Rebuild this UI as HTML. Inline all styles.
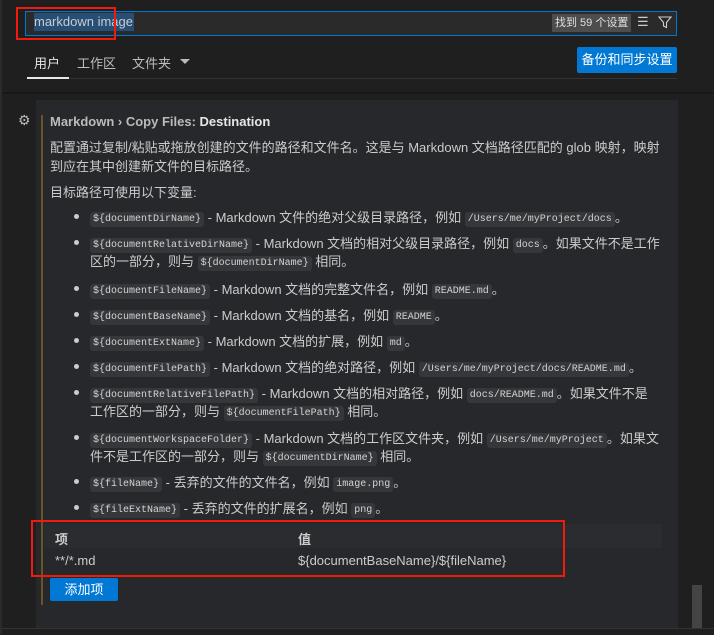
<!DOCTYPE html>
<html><head><meta charset="utf-8"><style>
body{margin:0;width:714px;height:634px;background:#1f1f1f;overflow:hidden;position:relative;font-family:"Liberation Sans","Noto Sans CJK SC",sans-serif;font-size:13px;color:#cccccc}
.a{position:absolute;white-space:nowrap}
code{font-family:"Liberation Mono",monospace;font-size:10px;background:#36373a;border-radius:3px;padding:2px 3px;color:#d4d4d4;vertical-align:1px}
.dot{position:absolute;width:5px;height:5px;border-radius:50%;background:#cccccc}
</style></head><body>
<div class="a" style="left:0;top:0;width:2px;height:634px;background:#2b2b2b"></div>
<div class="a" style="left:25px;top:11px;width:650px;height:23px;background:#2a2a2a;border:1px solid #0078d4"></div>
<div class="a" style="left:34px;top:13px;height:18px;line-height:18px;background:#264f78;color:#cccccc;font-size:13px;padding-right:1px">markdown image</div>
<div class="a" style="left:16px;top:7px;width:96px;height:29px;border:2px solid #f11a0b"></div>
<div class="a" style="left:552px;top:14px;height:18px;line-height:18px;padding:0 3px;background:#4d4d4d;color:#e0e0e0;font-size:11px">找到 59 个设置</div>
<div class="a" style="left:637px;top:14px;font-size:13px;color:#ccc">☰</div>
<svg class="a" style="left:657px;top:14px" width="16" height="16" viewBox="0 0 16 16"><path d="M2 3h12l-4.5 5.5v5l-3-1.5v-3.5z" fill="none" stroke="#ccc" stroke-width="1.1"/></svg>
<div class="a" style="left:34px;top:53px;color:#e7e7e7;font-size:13px">用户</div>
<div class="a" style="left:77px;top:53px;color:#bdbdbd">工作区</div>
<div class="a" style="left:132px;top:53px;color:#bdbdbd">文件夹</div>
<div class="a" style="left:180px;top:59px;width:0;height:0;border-left:5px solid transparent;border-right:5px solid transparent;border-top:5px solid #bbb"></div>
<div class="a" style="left:27px;top:78px;width:650px;height:1px;background:#333"></div>
<div class="a" style="left:27px;top:77px;width:42px;height:2px;background:#e7e7e7"></div>
<div class="a" style="left:577px;top:47px;width:100px;height:26px;background:#0078d4;color:#fff;line-height:26px;text-align:center;border-radius:2px">备份和同步设置</div>
<div class="a" style="left:2px;top:92px;width:712px;height:2px;background:#181818"></div>
<div class="a" style="left:36px;top:100px;width:642px;height:528px;background:#27282b"></div>
<div class="a" style="left:41px;top:115px;width:2px;height:490px;background:#6b5527"></div>
<div class="a" style="left:18px;top:112px;font-size:14px;color:#bbb">⚙</div>
<div class="a" style="left:692px;top:585px;width:10px;height:43px;background:#444"></div>
<div class="a" style="left:2px;top:628px;width:712px;height:6px;background:#1f1f1f;border-top:1px solid #333"></div>
<div class="a" style="left:50px;top:114px;color:#bbb;font-weight:bold">Markdown › Copy Files: <span style="color:#e7e7e7">Destination</span></div>
<div class="a" style="left:50px;top:137px">配置通过复制/粘贴或拖放创建的文件的路径和文件名。这是与 Markdown 文档路径匹配的 glob 映射，映射</div>
<div class="a" style="left:50px;top:156px">到应在其中创建新文件的目标路径。</div>
<div class="a" style="left:50px;top:182px">目标路径可使用以下变量:</div>

<div class="dot" style="left:74px;top:214px"></div><div class="a" style="left:90px;top:207px"><code>${documentDirName}</code> - Markdown 文件的绝对父级目录路径，例如 <code>/Users/me/myProject/docs</code>。</div>
<div class="dot" style="left:74px;top:240px"></div><div class="a" style="left:90px;top:233px"><code>${documentRelativeDirName}</code> - Markdown 文档的相对父级目录路径，例如 <code>docs</code>。如果文件不是工作</div>
<div class="a" style="left:90px;top:251px">区的一部分，则与 <code>${documentDirName}</code> 相同。</div>
<div class="dot" style="left:74px;top:286px"></div><div class="a" style="left:90px;top:279px"><code>${documentFileName}</code> - Markdown 文档的完整文件名，例如 <code>README.md</code>。</div>
<div class="dot" style="left:74px;top:312px"></div><div class="a" style="left:90px;top:305px"><code>${documentBaseName}</code> - Markdown 文档的基名，例如 <code>README</code>。</div>
<div class="dot" style="left:74px;top:338px"></div><div class="a" style="left:90px;top:331px"><code>${documentExtName}</code> - Markdown 文档的扩展，例如 <code>md</code>。</div>
<div class="dot" style="left:74px;top:364px"></div><div class="a" style="left:90px;top:357px"><code>${documentFilePath}</code> - Markdown 文档的绝对路径，例如 <code>/Users/me/myProject/docs/README.md</code>。</div>
<div class="dot" style="left:74px;top:390px"></div><div class="a" style="left:90px;top:383px"><code>${documentRelativeFilePath}</code> - Markdown 文档的相对路径，例如 <code>docs/README.md</code>。如果文件不是</div>
<div class="a" style="left:90px;top:401px">工作区的一部分，则与 <code>${documentFilePath}</code> 相同。</div>
<div class="dot" style="left:74px;top:435px"></div><div class="a" style="left:90px;top:428px"><code>${documentWorkspaceFolder}</code> - Markdown 文档的工作区文件夹，例如 <code>/Users/me/myProject</code>。如果文</div>
<div class="a" style="left:90px;top:446px">件不是工作区的一部分，则与 <code>${documentDirName}</code> 相同。</div>
<div class="dot" style="left:74px;top:479px"></div><div class="a" style="left:90px;top:472px"><code>${fileName}</code> - 丢弃的文件的文件名，例如 <code>image.png</code>。</div>
<div class="dot" style="left:74px;top:505px"></div><div class="a" style="left:90px;top:498px"><code>${fileExtName}</code> - 丢弃的文件的扩展名，例如 <code>png</code>。</div>

<div class="a" style="left:44px;top:524px;width:618px;height:24px;background:#2b2c2f"></div>
<div class="a" style="left:55px;top:529px;font-weight:bold;color:#ccc">项</div>
<div class="a" style="left:298px;top:529px;font-weight:bold;color:#ccc">值</div>
<div class="a" style="left:55px;top:553px">**/*.md</div>
<div class="a" style="left:298px;top:553px">${documentBaseName}/${fileName}</div>
<div class="a" style="left:31px;top:520px;width:530px;height:53px;border:2px solid #f11a0b"></div>
<div class="a" style="left:50px;top:578px;width:68px;height:23px;background:#0078d4;color:#fff;line-height:23px;text-align:center;border-radius:2px">添加项</div>
</body></html>
